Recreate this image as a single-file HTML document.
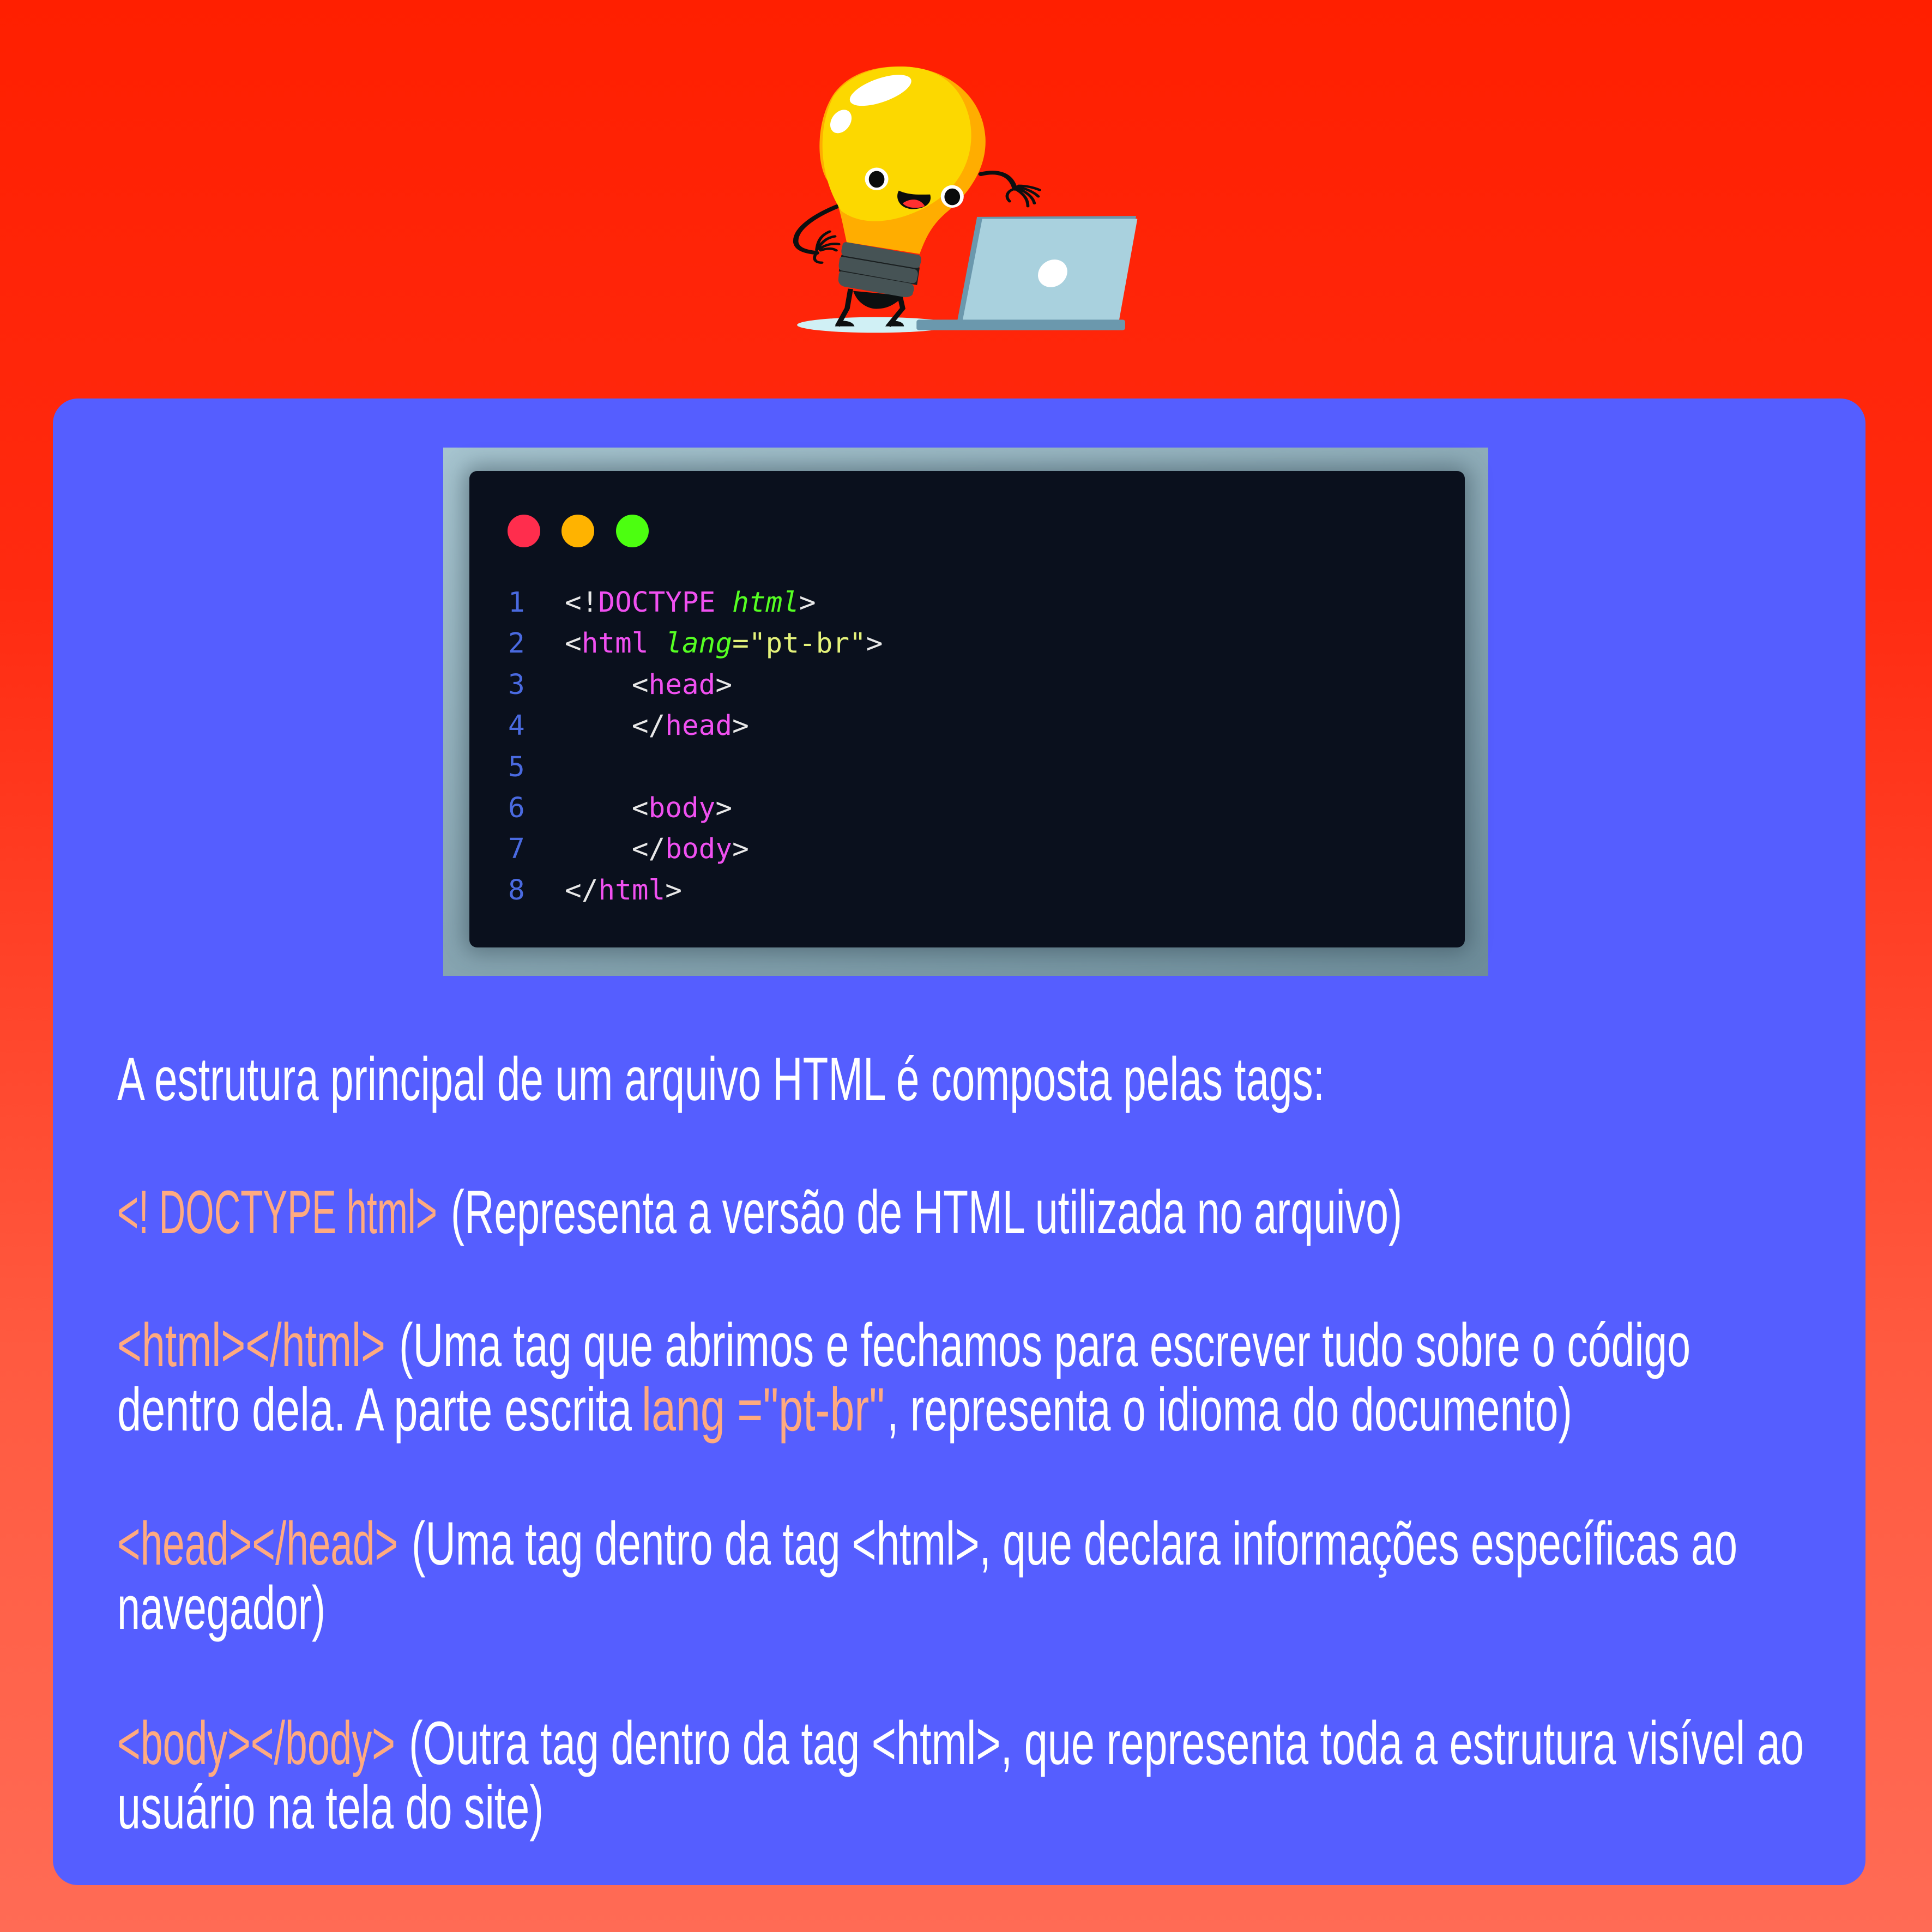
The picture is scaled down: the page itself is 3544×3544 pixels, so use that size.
<!DOCTYPE html>
<html><head><meta charset="utf-8"><style>
html,body{margin:0;padding:0}
body{width:3544px;height:3544px;position:relative;overflow:hidden;background:linear-gradient(180deg,#ff1f00 0%,#ff2a10 30%,#ff5a40 70%,#ff6b55 100%);font-family:"Liberation Sans",sans-serif}
.panel{position:absolute;left:97px;top:731px;width:3325px;height:2727px;background:#555eff;border-radius:46px}
.frame{position:absolute;left:813px;top:821px;width:1917px;height:969px;background:linear-gradient(160deg,#a6c4cf 0%,#8aa8b4 50%,#6d8c99 100%)}
.inner{position:absolute;left:861px;top:864px;width:1826px;height:874px;background:#0a101d;border-radius:14px;box-shadow:0 0 40px 10px rgba(40,60,70,.45)}
.dot{position:absolute;top:944px;width:60px;height:60px;border-radius:50%}
.code{position:absolute;font-family:"DejaVu Sans Mono","Liberation Mono",monospace;font-size:51px;line-height:75.4px;white-space:pre;color:#e8e8e8}
.n{color:#4a6ae0}.t{color:#f050f0}.a{color:#55ff22;font-style:italic}.s{color:#e4f27a}
svg.txt{position:absolute;left:0;top:0}
svg.txt text{font-family:"Liberation Sans Narrow","Liberation Sans",sans-serif;font-size:112px;fill:#fff}
svg.txt text.o{fill:#ffaa80}
</style></head><body>
<svg style="position:absolute;left:1400px;top:80px" width="750" height="560" viewBox="0 0 1568 1568" preserveAspectRatio="none">
<ellipse cx="430" cy="1445" rx="300" ry="40" fill="#d0f0f5"/>
<path d="M295,830 C200,880 120,950 125,1020 C130,1060 170,1070 205,1075" stroke="#0c0f10" stroke-width="20" fill="none" stroke-linecap="round"/>
<path d="M205,1075 C190,1100 195,1125 225,1125 M205,1060 C210,1000 230,980 255,965 M210,1050 C230,1010 250,995 275,990 M215,1055 C240,1030 270,1025 290,1030 M220,1062 C245,1050 265,1050 280,1062" stroke="#0c0f10" stroke-width="12" fill="none" stroke-linecap="round"/>
<path d="M835,670 C900,650 950,670 965,745" stroke="#0c0f10" stroke-width="20" fill="none" stroke-linecap="round"/>
<path d="M965,745 C930,760 930,790 945,810 M965,745 C1000,770 1015,800 1015,835 M970,740 C1010,760 1035,790 1040,820 M975,735 C1010,745 1040,765 1055,785 M980,730 C1010,730 1040,740 1060,752" stroke="#0c0f10" stroke-width="12" fill="none" stroke-linecap="round"/>
<path d="M335,1260 L322,1360 L285,1450 M525,1300 L535,1360 L480,1450" stroke="#0c0f10" stroke-width="20" fill="none"/>
<path d="M275,1452 L290,1425 C320,1420 345,1430 350,1452 Z M468,1452 L485,1425 C515,1420 538,1430 540,1452 Z" fill="#0c0f10"/>
<path d="M345,1270 C360,1330 400,1365 440,1362 C490,1360 520,1320 540,1295 Z" fill="#0c0f10"/>
<path d="M320,1020 C300,900 290,800 240,690 C200,580 210,380 270,260 C340,130 460,115 540,118 C700,125 840,260 852,480 C860,650 780,780 700,870 C640,940 620,1010 600,1080 Z" fill="#ffad00"/>
<path d="M300,860 C220,700 200,450 270,270 C340,140 460,115 540,118 C680,125 760,220 790,380 C820,560 760,720 660,810 C560,900 400,960 300,860 Z" fill="#fcd800"/>
<ellipse cx="450" cy="240" rx="130" ry="58" transform="rotate(-28 450 240)" fill="#fff"/>
<ellipse cx="298" cy="400" rx="38" ry="62" transform="rotate(18 298 400)" fill="#fff"/>
<ellipse cx="435" cy="695" rx="45" ry="58" fill="#fff"/><ellipse cx="435" cy="697" rx="30" ry="43" fill="#0a0c0c"/>
<ellipse cx="725" cy="785" rx="44" ry="58" fill="#fff"/><ellipse cx="725" cy="787" rx="30" ry="43" fill="#0a0c0c"/>
<path d="M520,755 C560,780 600,775 640,775 C650,820 620,850 570,850 C520,845 505,790 520,755 Z" fill="#0a0c0c"/>
<path d="M535,820 C560,795 600,790 620,835 C590,850 550,845 535,820 Z" fill="#ff3030"/>
<path d="M300,1085 L600,1150 L590,1240 L290,1170 Z" fill="#1a1f20"/>
<path d="M320,1020 L595,1085 Q608,1090 605,1120 L600,1145 Q595,1155 580,1152 L310,1090 Q298,1085 300,1060 L305,1030 Q310,1018 320,1020 Z" fill="#465355"/>
<path d="M305,1095 L580,1158 Q595,1165 593,1190 L588,1220 Q583,1232 568,1230 L300,1165 Q288,1160 290,1135 L293,1105 Q296,1092 305,1095 Z" fill="#465355"/>
<path d="M300,1170 L565,1232 Q580,1240 578,1265 L572,1290 Q560,1305 540,1302 L310,1248 Q290,1240 288,1215 L290,1185 Q293,1168 300,1170 Z" fill="#465355"/>
<path d="M820,890 L1430,885 L1365,1420 L745,1420 Z" fill="#6b98ad"/>
<path d="M840,900 L1435,900 L1365,1420 L765,1420 Z" fill="#a9d1de"/>
<ellipse cx="1110" cy="1180" rx="55" ry="72" transform="rotate(15 1110 1180)" fill="#fff"/>
<rect x="588" y="1418" width="800" height="54" rx="10" fill="#6b98ad"/>
</svg>
<div class="panel"></div>
<div class="frame"></div>
<div class="inner"></div>
<div class="dot" style="left:931px;background:#ff2d4d"></div>
<div class="dot" style="left:1030px;background:#ffb300"></div>
<div class="dot" style="left:1130px;background:#4cff10"></div>
<div class="code" style="left:932px;top:1068px"><span class="n">1
2
3
4
5
6
7
8</span></div>
<div class="code" style="left:1036px;top:1068px">&lt;!<span class="t">DOCTYPE</span> <span class="a">html</span>&gt;
&lt;<span class="t">html</span> <span class="a">lang</span><span class="s">="pt-br"</span>&gt;
    &lt;<span class="t">head</span>&gt;
    &lt;/<span class="t">head</span>&gt;

    &lt;<span class="t">body</span>&gt;
    &lt;/<span class="t">body</span>&gt;
&lt;/<span class="t">html</span>&gt;</div>
<svg class="txt" width="3544" height="3544">
<text x="215" y="2018" textLength="2215" lengthAdjust="spacingAndGlyphs">A estrutura principal de um arquivo HTML é composta pelas tags:</text>
<text class="o" x="215" y="2262" textLength="587" lengthAdjust="spacingAndGlyphs">&lt;! DOCTYPE html&gt;</text>
<text x="827" y="2262" textLength="1745" lengthAdjust="spacingAndGlyphs">(Representa a versão de HTML utilizada no arquivo)</text>
<text class="o" x="215" y="2506" textLength="492" lengthAdjust="spacingAndGlyphs">&lt;html&gt;&lt;/html&gt;</text>
<text x="732" y="2506" textLength="2369" lengthAdjust="spacingAndGlyphs">(Uma tag que abrimos e fechamos para escrever tudo sobre o código</text>
<text x="215" y="2624" textLength="944" lengthAdjust="spacingAndGlyphs">dentro dela. A parte escrita</text>
<text class="o" x="1177" y="2624" textLength="446" lengthAdjust="spacingAndGlyphs">lang ="pt-br"</text>
<text x="1627" y="2624" textLength="1257" lengthAdjust="spacingAndGlyphs">, representa o idioma do documento)</text>
<text class="o" x="215" y="2870" textLength="515" lengthAdjust="spacingAndGlyphs">&lt;head&gt;&lt;/head&gt;</text>
<text x="755" y="2870" textLength="2432" lengthAdjust="spacingAndGlyphs">(Uma tag dentro da tag &lt;html&gt;, que declara informações específicas ao</text>
<text x="215" y="2988" textLength="382" lengthAdjust="spacingAndGlyphs">navegador)</text>
<text class="o" x="215" y="3236" textLength="510" lengthAdjust="spacingAndGlyphs">&lt;body&gt;&lt;/body&gt;</text>
<text x="750" y="3236" textLength="2559" lengthAdjust="spacingAndGlyphs">(Outra tag dentro da tag &lt;html&gt;, que representa toda a estrutura visível ao</text>
<text x="215" y="3354" textLength="782" lengthAdjust="spacingAndGlyphs">usuário na tela do site)</text>
</svg>
</body></html>
